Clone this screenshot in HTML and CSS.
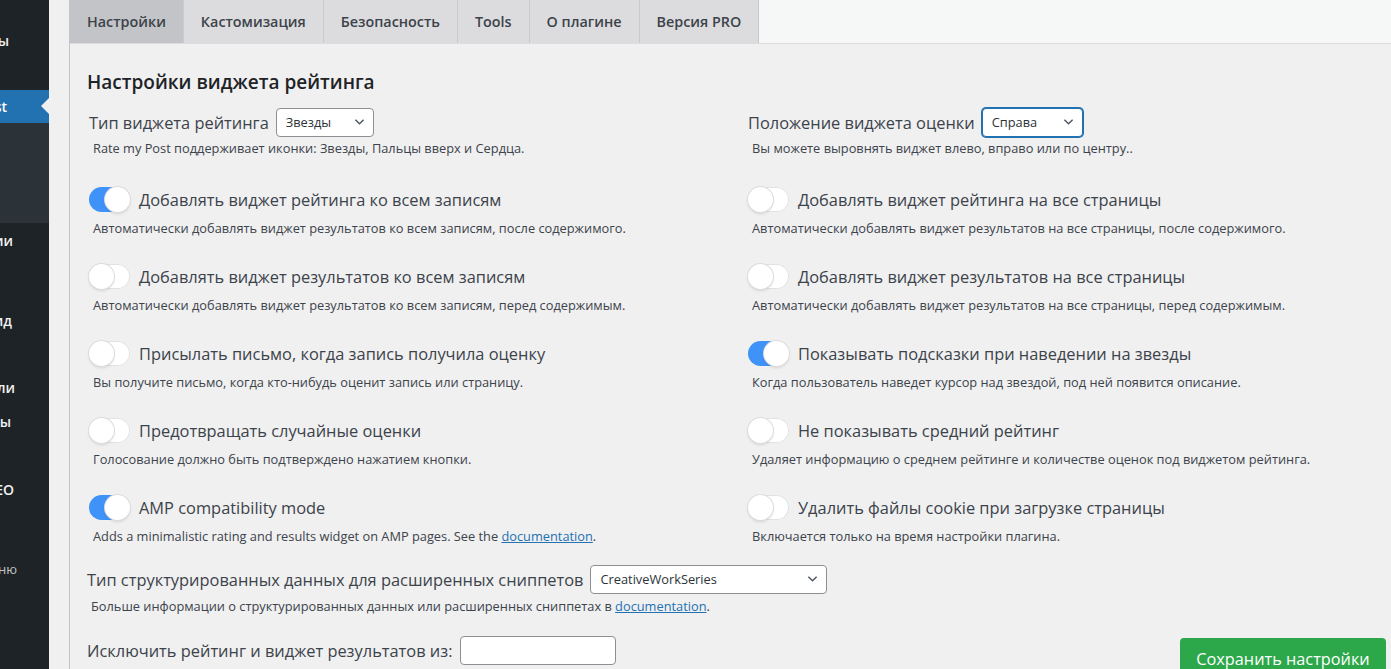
FILE: index.html
```html
<!DOCTYPE html>
<html lang="ru">
<head>
<meta charset="utf-8">
<title>Rate my Post</title>
<link rel="stylesheet" href="styles.css">
</head>
<body>
<div class="page">
  <nav class="sidebar">
    <div class="sp h23"></div>
    <div class="mi e10">Страницы</div>
    <div class="mi h33"></div>
    <div class="mi active e7"><span>Rate my Post</span><i class="pointer"></i></div>
    <div class="sub"></div>
    <div class="mi e13">Комментарии</div>
    <div class="sp h46"></div>
    <div class="mi e12">Внешний вид</div>
    <div class="sp h33"></div>
    <div class="mi e15">Пользователи</div>
    <div class="mi e11">Инструменты</div>
    <div class="sp h34"></div>
    <div class="mi e14">All in One SEO</div>
    <div class="sp h46"></div>
    <div class="mi collapse e17">Свернуть меню</div>
  </nav>

  <main class="main">
    <div class="panel">
      <div class="tabs">
        <div class="tab current">Настройки</div>
        <div class="tab">Кастомизация</div>
        <div class="tab">Безопасность</div>
        <div class="tab">Tools</div>
        <div class="tab">О плагине</div>
        <div class="tab">Версия PRO</div>
      </div>

      <div class="content">
        <h2 class="title">Настройки виджета рейтинга</h2>

        <div class="grid">
          <div class="opt opt-select">
            <div class="head">
              <span class="label">Тип виджета рейтинга</span>
              <div class="select w98"><span>Звезды</span><svg class="chev" viewBox="0 0 12 8"><polyline points="1.5,1.5 6,6 10.5,1.5"/></svg></div>
            </div>
            <p class="desc">Rate my Post поддерживает иконки: Звезды, Пальцы вверх и Сердца.</p>
          </div>
          <div class="opt opt-select">
            <div class="head">
              <span class="label">Положение виджета оценки</span>
              <div class="select w101 focus"><span>Справа</span><svg class="chev" viewBox="0 0 12 8"><polyline points="1.5,1.5 6,6 10.5,1.5"/></svg></div>
            </div>
            <p class="desc">Вы можете выровнять виджет влево, вправо или по центру..</p>
          </div>

          <div class="opt">
            <div class="head"><span class="toggle on"></span><span class="label">Добавлять виджет рейтинга ко всем записям</span></div>
            <p class="desc">Автоматически добавлять виджет результатов ко всем записям, после содержимого.</p>
          </div>
          <div class="opt">
            <div class="head"><span class="toggle"></span><span class="label">Добавлять виджет рейтинга на все страницы</span></div>
            <p class="desc">Автоматически добавлять виджет результатов на все страницы, после содержимого.</p>
          </div>

          <div class="opt">
            <div class="head"><span class="toggle"></span><span class="label">Добавлять виджет результатов ко всем записям</span></div>
            <p class="desc">Автоматически добавлять виджет результатов ко всем записям, перед содержимым.</p>
          </div>
          <div class="opt">
            <div class="head"><span class="toggle"></span><span class="label">Добавлять виджет результатов на все страницы</span></div>
            <p class="desc">Автоматически добавлять виджет результатов на все страницы, перед содержимым.</p>
          </div>

          <div class="opt">
            <div class="head"><span class="toggle"></span><span class="label">Присылать письмо, когда запись получила оценку</span></div>
            <p class="desc">Вы получите письмо, когда кто-нибудь оценит запись или страницу.</p>
          </div>
          <div class="opt">
            <div class="head"><span class="toggle on"></span><span class="label">Показывать подсказки при наведении на звезды</span></div>
            <p class="desc">Когда пользователь наведет курсор над звездой, под ней появится описание.</p>
          </div>

          <div class="opt">
            <div class="head"><span class="toggle"></span><span class="label">Предотвращать случайные оценки</span></div>
            <p class="desc">Голосование должно быть подтверждено нажатием кнопки.</p>
          </div>
          <div class="opt">
            <div class="head"><span class="toggle"></span><span class="label">Не показывать средний рейтинг</span></div>
            <p class="desc">Удаляет информацию о среднем рейтинге и количестве оценок под виджетом рейтинга.</p>
          </div>

          <div class="opt">
            <div class="head"><span class="toggle on"></span><span class="label">AMP compatibility mode</span></div>
            <p class="desc">Adds a minimalistic rating and results widget on AMP pages. See the <a href="#">documentation</a>.</p>
          </div>
          <div class="opt">
            <div class="head"><span class="toggle"></span><span class="label">Удалить файлы cookie при загрузке страницы</span></div>
            <p class="desc">Включается только на время настройки плагина.</p>
          </div>
        </div>

        <div class="opt wide schema">
          <div class="head">
            <span class="label">Тип структурированных данных для расширенных сниппетов</span>
            <div class="select w237"><span>CreativeWorkSeries</span><svg class="chev" viewBox="0 0 12 8"><polyline points="1.5,1.5 6,6 10.5,1.5"/></svg></div>
          </div>
          <p class="desc">Больше информации о структурированных данных или расширенных сниппетах в <a href="#">documentation</a>.</p>
        </div>

        <div class="last">
          <div class="head">
            <span class="label">Исключить рейтинг и виджет результатов из:</span>
            <span class="input"></span>
          </div>
          <button class="save">Сохранить настройки</button>
        </div>
      </div>
    </div>
  </main>
</div>
</body>
</html>
```

FILE: styles.css
```css
* { box-sizing: border-box; }
html, body { margin: 0; padding: 0; }
body {
  font-family: "Open Sans", "Noto Sans", sans-serif;
  background: #f0f0f1;
  color: #3c434a;
}
.page { display: flex; height: 669px; overflow: hidden; }

/* sidebar */
.sidebar {
  width: 49px; flex: none;
  background: #1d2327;
  display: flex; flex-direction: column;
  overflow: hidden;
}
.sp { flex: none; }
.h23 { height: 23px; }
.h33 { height: 33px; }
.h34 { height: 34px; }
.h46 { height: 46px; }
.mi {
  flex: none; height: 34px;
  display: flex; align-items: center; justify-content: flex-end;
  white-space: nowrap;
  color: #f0f0f1; font-size: 14px; font-weight: 600;
  position: relative;
}
.mi.h33 { height: 33px; }
.mi.active { height: 33px; background: #2271b1; color: #fff; }
.mi.collapse { color: #c3c4c7; font-size: 13px; font-weight: 400; }
.e7 { padding-right: 42px; }
.e10 { padding-right: 40px; }
.e11 { padding-right: 38px; }
.e12 { padding-right: 37px; }
.e13 { padding-right: 36px; }
.e14 { padding-right: 35px; }
.e15 { padding-right: 34px; }
.e17 { padding-right: 32px; }
.pointer {
  position: absolute; right: 0; top: 8px;
  width: 0; height: 0;
  border-top: 8px solid transparent;
  border-bottom: 8px solid transparent;
  border-right: 8px solid #f0f0f1;
}
.sub { flex: none; height: 100px; background: #2c3338; }

/* main */
.main { flex: 1; padding-left: 20px; min-width: 0; }
.panel { height: 100%; border-left: 1px solid #c3c4c7; }

.tabs {
  display: flex; height: 44px;
  background: #f6f7f7;
  border-bottom: 1px solid #dcdcde;
}
.tab {
  height: 43px; padding: 0 17px;
  display: flex; align-items: center;
  background: #dcdcde;
  border-right: 1px solid #c9cacc;
  font-size: 14.35px; font-weight: 600; color: #3c434a;
  white-space: nowrap;
}
.tab.current { background: #c3c4c7; }

.content { padding: 25px 0 0 17px; position: relative; }
.title {
  margin: 0; font-size: 19px; font-weight: 600; color: #1d2327;
  line-height: 26px;
}

.grid {
  display: grid;
  grid-template-columns: 659px 1fr;
  row-gap: 25px;
  margin-top: 13px;
  padding-left: 2px;
}
.opt { min-width: 0; }
.head {
  display: flex; align-items: center;
  height: 28px; white-space: nowrap;
}
.label { font-size: 16.4px; color: #3c434a; }
.desc {
  margin: 6px 0 0 4px;
  font-size: 12.8px; line-height: 18px; color: #3c434a;
  white-space: nowrap;
}
.opt-select .desc { margin-top: 3px; margin-bottom: 3px; }
.desc a { color: #2271b1; text-decoration: underline; }

.select {
  margin-left: 7px;
  height: 29px; background: #fff;
  border: 1px solid #8c8f94; border-radius: 4px;
  display: flex; align-items: center; justify-content: space-between;
  padding: 0 8px 0 9px;
  font-size: 12.8px; color: #2c3338;
}
.select.focus { border-color: #2271b1; box-shadow: 0 0 0 1px #2271b1; }
.w98 { width: 98px; }
.w101 { width: 101px; }
.w237 { width: 237px; }
.chev { width: 11px; height: 8px; fill: none; stroke: #50575e; stroke-width: 1.6; }

.toggle {
  flex: none;
  width: 41px; height: 25px; border-radius: 13px;
  background: #fff;
  box-shadow: inset 0 0 0 1px #e2e2e4;
  margin-right: 9px;
  position: relative;
}
.toggle::after {
  content: ""; position: absolute; top: 0; left: 0;
  width: 25px; height: 25px; border-radius: 50%;
  background: #fff;
  box-shadow: 0 0 0 1px #dcdcde, 0 2px 3px rgba(0,0,0,0.12);
}
.toggle.on { background: #3f92f7; box-shadow: none; }
.toggle.on::after { left: 16px; }

.schema { margin-top: 20px; }
.schema .desc { margin-top: 4px; }

.last {
  margin-top: 21px;
  display: flex; justify-content: space-between; align-items: flex-start;
}
.input {
  margin-left: 7px; width: 156px; height: 29px;
  background: #fff; border: 1px solid #8c8f94; border-radius: 4px;
}
.save {
  margin-top: 2px; margin-right: 5px;
  width: 206px; height: 42px;
  background: #2ca84a; color: #fff; border: none; border-radius: 4px;
  font-family: inherit; font-size: 16.3px;
  display: flex; align-items: flex-start; justify-content: center;
  padding-top: 10px;
}
```
